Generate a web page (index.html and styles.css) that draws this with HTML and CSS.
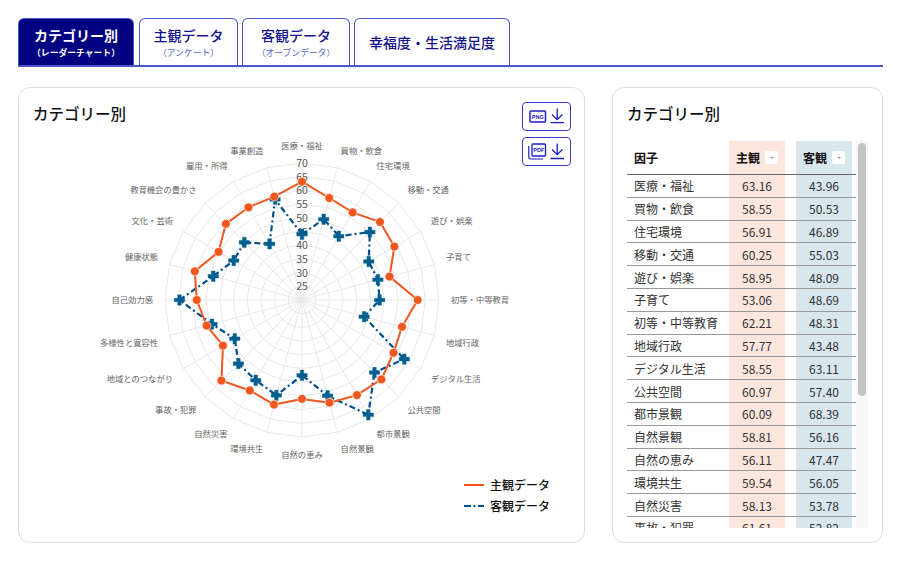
FILE: index.html
```html
<!DOCTYPE html>
<html lang="ja">
<head>
  <meta charset="UTF-8">
  <meta name="viewport" content="width=device-width, initial-scale=1">
  <title>カテゴリー別</title>
  <link rel="stylesheet" href="styles.css">
</head>
<body>

<nav class="tabs">
  <a class="tab tab-category active"><span class="tab-main">カテゴリー別</span><span class="tab-sub">（レーダーチャート）</span></a>
  <a class="tab tab-subjective"><span class="tab-main">主観データ</span><span class="tab-sub">（アンケート）</span></a>
  <a class="tab tab-objective"><span class="tab-main">客観データ</span><span class="tab-sub">（オープンデータ）</span></a>
  <a class="tab tab-wellbeing"><span class="tab-main">幸福度・生活満足度</span></a>
</nav>

<main class="panels">
  <section class="card chart-card">
    <h2>カテゴリー別</h2>
    <div class="downloads">
      <button class="dl-btn" aria-label="PNG download">
        <svg width="46" height="26" viewBox="0 0 46 26" fill="none" stroke="#1c1cc4">
          <rect x="6" y="7" width="15.500" height="11" rx="1" stroke-width="1.500"/>
          <text x="13.750" y="14.500" class="dl-text">PNG</text>
          <path d="M33.200 4.500v11M28 10.500l5.200 5.200 5.200-5.200M26.500 18.700h13.500" stroke-width="1.300"/>
        </svg>
      </button>
      <button class="dl-btn" aria-label="PDF download">
        <svg width="46" height="26" viewBox="0 0 46 26" fill="none" stroke="#1c1cc4">
          <path d="M4.800 7v11.500a1.500 1.500 0 0 0 1.500 1.500h12.700" stroke-width="1.200"/>
          <rect x="8" y="5" width="13.500" height="12" rx="1" stroke-width="1.300"/>
          <text x="14.750" y="12.800" class="dl-text">PDF</text>
          <path d="M33.200 4.500v11M28 10.500l5.200 5.200 5.200-5.200M26.500 19.500h13.500" stroke-width="1.300"/>
        </svg>
      </button>
    </div>
    <svg id="radar" class="radar" width="540" height="350" viewBox="0 0 540 350"></svg>
    <ul class="legend">
      <li><svg width="20" height="4"><path d="M0 2h20" stroke="#f0561d" stroke-width="2"/></svg>主観データ</li>
      <li><svg width="20" height="4"><path d="M0 2h7M9.500 2h2M14 2h6" stroke="#004e8c" stroke-width="2"/></svg>客観データ</li>
    </ul>
  </section>

  <section class="card table-card">
    <h2>カテゴリー別</h2>
    <div class="table-wrap">
      <table class="factors">
        <thead>
          <tr>
            <th class="name">因子</th>
            <th class="subj"><span class="th-in">主観<i class="sort"></i></span></th>
            <th class="gap"></th>
            <th class="obj"><span class="th-in">客観<i class="sort"></i></span></th>
            <th class="end"></th>
          </tr>
        </thead>
        <tbody id="rows"></tbody>
      </table>
      <div class="scrollbar"><div class="thumb"></div></div>
    </div>
  </section>
</main>

<script src="chart.js"></script>
</body>
</html>
```

FILE: styles.css
```css
* {
  box-sizing: border-box;
}

body {
  margin: 0;
  padding: 18px 21px 0 18px;
  background: #ffffff;
  color: #111111;
  font-family: 'Noto Sans CJK JP', 'Noto Sans', sans-serif;
}

.tabs {
  display: flex;
  gap: 4px;
  height: 49px;
  border-bottom: 2px solid #4d57cc;
}

.tab {
  display: flex;
  flex-direction: column;
  align-items: center;
  justify-content: center;
  height: 47px;
  border: 1px solid #4d57cc;
  border-bottom: none;
  border-radius: 6px 6px 0 0;
  color: #14148c;
  background: #ffffff;
}

.tab-category { width: 116px; margin-right: 1px; }
.tab-subjective { width: 99px; }
.tab-objective { width: 108px; }
.tab-wellbeing { width: 156px; }

.tab.active {
  background: #000080;
  color: #ffffff;
}

.tab-main {
  font-size: 14px;
  font-weight: 500;
  line-height: 20px;
}

.tab.active .tab-main {
  font-weight: 700;
}

.tab-sub {
  font-size: 8.800px;
  line-height: 15px;
  color: #5a64c8;
}

.tab.active .tab-sub {
  color: #ffffff;
  font-weight: 700;
}

.panels {
  display: flex;
  gap: 27px;
  margin-top: 20px;
}

.card {
  position: relative;
  height: 456px;
  border: 1px solid #dddddd;
  border-radius: 12px;
  background: #ffffff;
}

.card h2 {
  margin: 0;
  font-size: 15.500px;
  font-weight: 500;
  line-height: 22px;
}

.chart-card {
  width: 567px;
  padding: 14px;
}

.table-card {
  width: 271px;
  padding: 14px 14px 14px;
}

.downloads {
  position: absolute;
  top: 14px;
  right: 13px;
  display: flex;
  flex-direction: column;
  gap: 6px;
}

.dl-btn {
  display: block;
  width: 49px;
  height: 29px;
  padding: 0;
  border: 1px solid #3a3ad0;
  border-radius: 4px;
  background: #ffffff;
}

.dl-btn svg {
  display: block;
  margin: 0 auto;
}

.dl-text {
  font-family: 'Liberation Sans', sans-serif;
  font-size: 5.500px;
  font-weight: 700;
  fill: #1c1cc4;
  stroke: none;
  text-anchor: middle;
}

.radar {
  position: absolute;
  left: 0;
  top: 43px;
}

.radar text {
  font-family: 'Noto Sans CJK JP', sans-serif;
}

.axis-label {
  font-size: 8.300px;
  fill: #666666;
}

.tick-label {
  font-size: 10.500px;
  fill: #555555;
  text-anchor: middle;
}

.legend {
  position: absolute;
  right: 34px;
  bottom: 27px;
  margin: 0;
  padding: 0;
  list-style: none;
  display: flex;
  flex-direction: column;
  gap: 3px;
  font-size: 12px;
  font-weight: 500;
  line-height: 18px;
}

.legend li {
  display: flex;
  align-items: center;
  gap: 6px;
}

.table-wrap {
  position: relative;
  height: 387px;
  margin-top: 17px;
  overflow: hidden;
}

.scrollbar {
  position: absolute;
  left: 229px;
  top: 0;
  bottom: 0;
  width: 12px;
  padding: 2px;
  background: #f7f7f7;
}

.thumb {
  height: 253px;
  border-radius: 4px;
  background: #c4c4c4;
}

.factors {
  width: 229px;
  border-collapse: collapse;
  table-layout: fixed;
  font-size: 12px;
}

.factors th {
  height: 33.500px;
  padding: 0;
  font-size: 12px;
  font-weight: 700;
  border-bottom: 1px solid #666666;
}

.factors td {
  height: 22.800px;
  padding: 0;
  line-height: 17px;
  border-bottom: 1px solid #999999;
  color: #333333;
}

.factors .name {
  width: 102px;
  padding-left: 7px;
  text-align: left;
}

.factors .subj {
  width: 56px;
  background: #fde6de;
  text-align: center;
}

.factors .gap {
  width: 11px;
}

.factors .obj {
  width: 56px;
  background: #d9e6ee;
  text-align: center;
}

.factors .end {
  width: 4px;
}

.th-in {
  display: inline-flex;
  align-items: center;
  gap: 5px;
}

.sort {
  position: relative;
  display: block;
  width: 13px;
  height: 13px;
  border-radius: 2px;
  background: #ffffff;
}

.sort::after {
  content: "";
  position: absolute;
  left: 4.500px;
  top: 5.500px;
  border: 2px solid transparent;
  border-top: 2.500px solid #999999;
  border-bottom: none;
}
```

FILE: chart.js
```js
const factors = [
  ['医療・福祉', 63.16, 43.96],
  ['買物・飲食', 58.55, 50.53],
  ['住宅環境', 56.91, 46.89],
  ['移動・交通', 60.25, 55.03],
  ['遊び・娯楽', 58.95, 48.09],
  ['子育て', 53.06, 48.69],
  ['初等・中等教育', 62.21, 48.31],
  ['地域行政', 57.77, 43.48],
  ['デジタル生活', 58.55, 63.11],
  ['公共空間', 60.97, 57.40],
  ['都市景観', 60.09, 68.39],
  ['自然景観', 58.81, 56.16],
  ['自然の恵み', 56.11, 47.47],
  ['環境共生', 59.54, 56.05],
  ['自然災害', 58.13, 53.78],
  ['事故・犯罪', 61.61, 52.82],
  ['地域とのつながり', 53.30, 48.30],
  ['多様性と寛容性', 56.06, 54.00],
  ['自己効力感', 58.40, 64.70],
  ['健康状態', 60.50, 53.50],
  ['文化・芸術', 55.15, 48.80],
  ['教育機会の豊かさ', 59.30, 49.75],
  ['雇用・所得', 59.08, 43.66],
  ['事業創造', 59.05, 58.00]
];

// table, only the rows in view of the scroll area
const rows = document.getElementById('rows');
factors.slice(0, 16).forEach(([name, subj, obj]) => {
  const tr = document.createElement('tr');
  tr.innerHTML = `<td class="name">${name}</td><td class="subj">${subj.toFixed(2)}</td>` +
    `<td class="gap"></td><td class="obj">${obj.toFixed(2)}</td><td class="end"></td>`;
  rows.appendChild(tr);
});

// radar, center and scale in svg units (svg starts at 19,131 on the page)
const cx = 283;
const cy = 169;
const unit = 2.74;
const svg = document.getElementById('radar');
let out = '';

function point(value, i) {
  const a = i * Math.PI / 12;
  const r = (value - 20) * unit;
  return [cx + r * Math.sin(a), cy - r * Math.cos(a)];
}

function polyline(values) {
  return values.map((v, i) => point(v, i).map(n => n.toFixed(1)).join(',')).join(' ');
}

for (let v = 25; v <= 70; v += 5) {
  out += `<polygon points="${polyline(factors.map(() => v))}" fill="none" stroke="#e8e8e8"/>`;
}
factors.forEach((f, i) => {
  const [x, y] = point(70, i);
  out += `<line x1="${cx}" y1="${cy}" x2="${x.toFixed(1)}" y2="${y.toFixed(1)}" stroke="#e8e8e8"/>`;
});
for (let v = 25; v <= 70; v += 5) {
  out += `<text class="tick-label" x="${cx}" y="${cy - (v - 20) * unit + 4}">${v}</text>`;
}

// axis labels
factors.forEach(([name], i) => {
  const [x, y] = point(70, i);
  const a = i * Math.PI / 12;
  const dx = Math.sin(a) * 12;
  let dy = -Math.cos(a) * 14;
  if (i !== 6 && i !== 18) dy += Math.cos(a) > 0 ? -3.5 : 3.5;
  let anchor = 'middle';
  if (i > 0 && i < 12) anchor = 'start';
  if (i > 12) anchor = 'end';
  out += `<text class="axis-label" text-anchor="${anchor}" x="${(x + dx).toFixed(1)}" y="${(y + dy + 3).toFixed(1)}">${name}</text>`;
});

// objective series first, subjective on top
const obj = factors.map(f => f[2]);
const subj = factors.map(f => f[1]);
out += `<polygon points="${polyline(obj)}" fill="none" stroke="#004e8c" stroke-width="2.2" stroke-dasharray="6 3 2 3"/>`;
obj.forEach((v, i) => {
  const [x, y] = point(v, i);
  out += `<path transform="translate(${x.toFixed(1)} ${y.toFixed(1)})" d="M-1.800-5.200h3.600v3.400h3.400v3.600h-3.400v3.400h-3.600v-3.400h-3.400v-3.600h3.400z" fill="#005f8f" stroke="#005f8f" stroke-width=".4"/>`;
});
out += `<polygon points="${polyline(subj)}" fill="none" stroke="#f0561d" stroke-width="2"/>`;
subj.forEach((v, i) => {
  const [x, y] = point(v, i);
  out += `<circle cx="${x.toFixed(1)}" cy="${y.toFixed(1)}" r="4.400" fill="#f0561d" stroke="#ffffff" stroke-width=".6"/>`;
});

svg.innerHTML = out;
```
